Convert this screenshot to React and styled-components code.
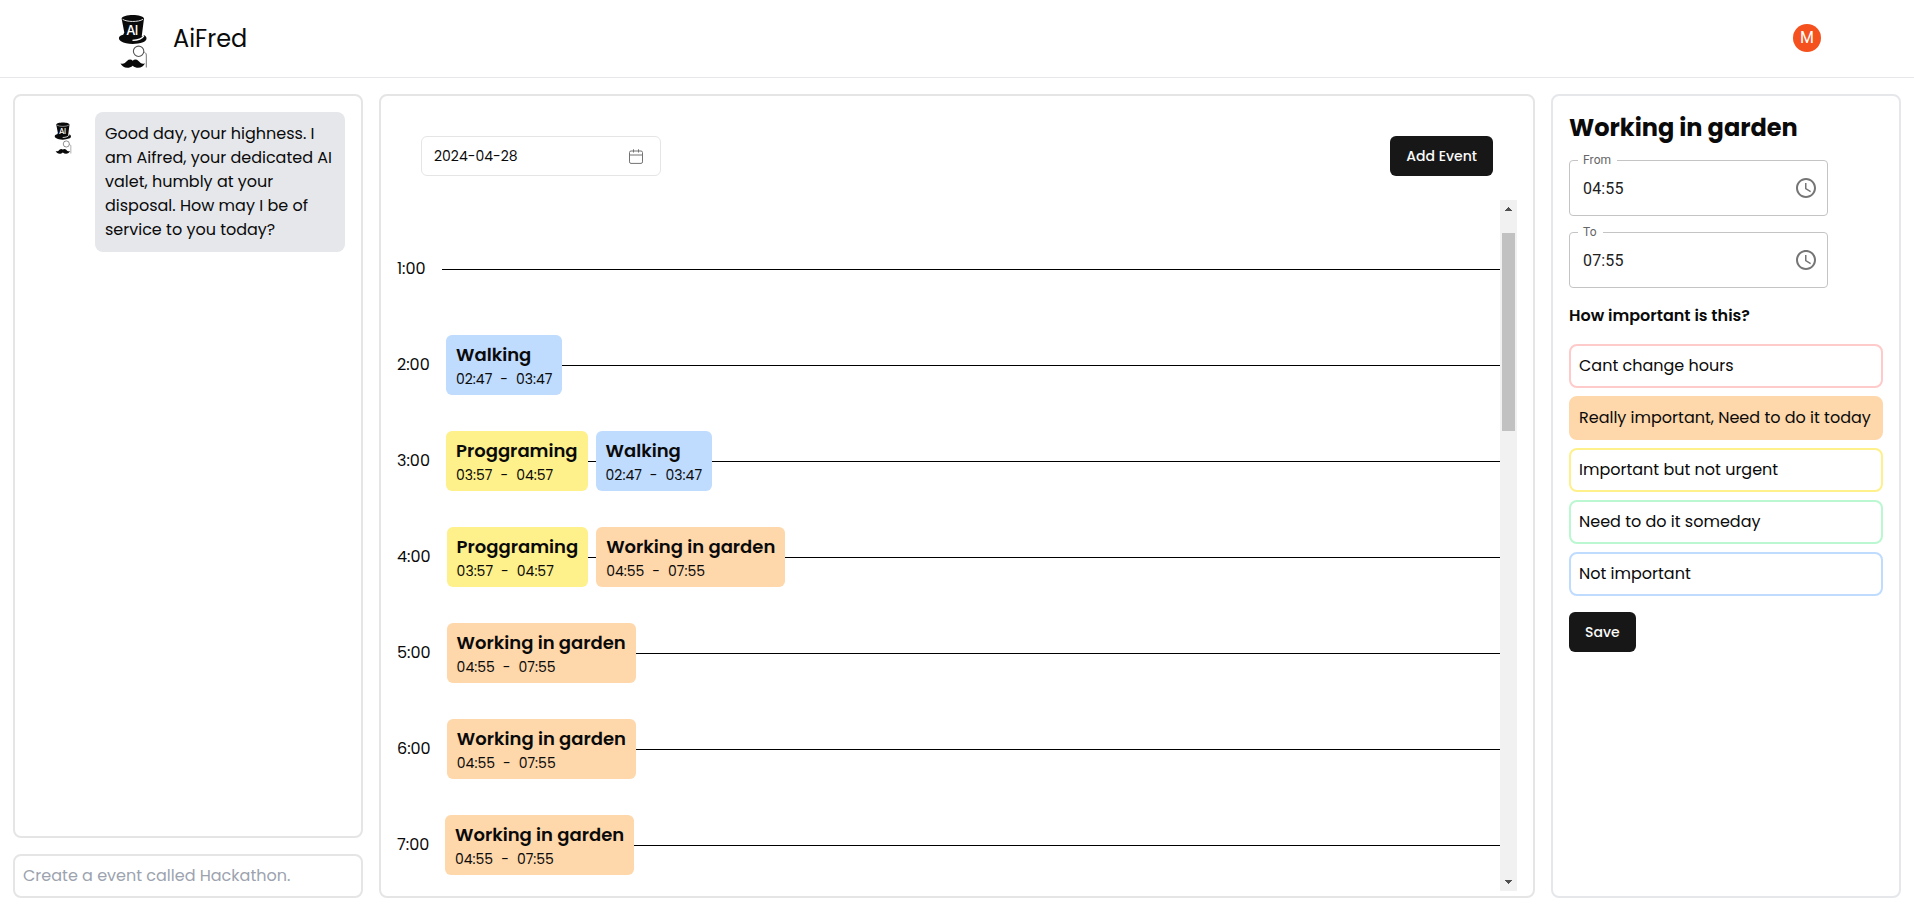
import React from "react";
import styled, { createGlobalStyle } from "styled-components";

const Global = createGlobalStyle`
  *, *::before, *::after { box-sizing: border-box; }
  body {
    margin: 0;
    background: #fff;
    color: #0a0a0a;
    font-family: Poppins, Inter, "Liberation Sans", sans-serif;
    font-size: 16px;
    line-height: 24px;
  }
  button, input { font: inherit; }
`;

const palette = {
  red: "#fecaca",
  orange: "#fed7aa",
  yellow: "#fef08a",
  green: "#bbf7d0",
  blue: "#bfdbfe",
};

const Page = styled.div`
  display: flex;
  flex-direction: column;
  height: 915px;
`;

const Header = styled.header`
  display: flex;
  align-items: center;
  justify-content: space-between;
  height: 78px;
  padding: 0 93px 0 118px;
  border-bottom: 1px solid #e5e7eb;
`;

const Brand = styled.div`
  display: flex;
  align-items: center;
  gap: 25px;
  padding-top: 6px;
`;

const BrandName = styled.span`
  font-size: 24px;
  line-height: 32px;
  margin-top: -6px;
`;

const Avatar = styled.div`
  display: flex;
  align-items: center;
  justify-content: center;
  width: 28px;
  height: 28px;
  margin-top: -1px;
  border-radius: 50%;
  background: #f4511e;
  color: #fff;
  font: 400 16px/28px Roboto, sans-serif;
`;

const Main = styled.main`
  display: grid;
  grid-template-columns: 350px 1fr 350px;
  gap: 16px;
  flex: 1;
  min-height: 0;
  padding: 16px 13px 17px;
`;

const Panel = styled.section`
  border: 2px solid ${(p) => p.$border || "#e5e5e5"};
  border-radius: 8px;
  min-height: 0;
`;

const ChatColumn = styled.div`
  display: flex;
  flex-direction: column;
  gap: 16px;
  min-height: 0;
`;

const ChatLog = styled(Panel)`
  display: flex;
  align-items: flex-start;
  flex: 1;
  padding: 16px 16px 16px 39px;
`;

const ChatAvatar = styled.div`
  width: 41px;
  padding-top: 10px;
  line-height: 0;
`;

const Bubble = styled.div`
  width: 250px;
  padding: 10px;
  border-radius: 8px;
  background: #e5e7eb;
`;

const ChatInput = styled.input`
  height: 44px;
  width: 100%;
  padding: 0 8px 2px;
  border: 2px solid #e5e5e5;
  border-radius: 8px;
  background: #fff;
  outline: none;
  &::placeholder { color: #9ca3af; opacity: 1; }
`;

const Calendar = styled(Panel)`
  display: flex;
  flex-direction: column;
  gap: 24px;
  padding: 40px 16px 5px;
`;

const Toolbar = styled.div`
  display: flex;
  justify-content: space-between;
  padding: 0 24px;
`;

const DateField = styled.div`
  display: flex;
  align-items: center;
  justify-content: space-between;
  width: 240px;
  height: 40px;
  padding: 0 17px 0 12px;
  border: 1px solid #e5e5e5;
  border-radius: 6px;
  font-size: 14px;
`;

const Button = styled.button`
  height: 40px;
  padding: 0 16px;
  border: 0;
  border-radius: 6px;
  background: #171717;
  color: #fafafa;
  font-size: 14px;
  font-weight: 500;
`;

const Schedule = styled.div`
  display: flex;
  flex: 1;
  min-height: 0;
  overflow: hidden;
`;

const Hours = styled.div`
  flex: 1;
  padding-top: 21px;
`;

const HourRow = styled.div`
  display: flex;
  align-items: center;
  height: 96px;
`;

const HourLabel = styled.span`
  width: ${(p) => p.$width}px;
`;

const HourTrack = styled.div`
  display: flex;
  align-items: center;
  gap: 8px;
  flex: 1;
  height: 60px;
  background: linear-gradient(#000, #000) 0 30px / 100% 1px no-repeat;
`;

const EventCard = styled.article`
  height: 60px;
  padding: 6px 10px;
  border-radius: 6px;
  background: ${(p) => palette[p.$color]};
  white-space: nowrap;
`;

const EventTitle = styled.div`
  font-size: 18px;
  line-height: 28px;
  font-weight: 600;
`;

const EventTime = styled.div`
  display: flex;
  gap: 8px;
  font-size: 14px;
  line-height: 20px;
`;

const Scrollbar = styled.div`
  display: flex;
  flex-direction: column;
  align-items: center;
  width: 17px;
  padding: 7px 0;
  background: #f1f1f1;
`;

const Thumb = styled.div`
  width: 13px;
  height: 198px;
  margin-top: 22px;
  background: #c1c1c1;
`;

const Arrow = styled.svg`
  display: block;
  width: 7px;
  height: 4px;
  fill: #505050;
  margin-top: ${(p) => (p.$end ? "auto" : 0)};
`;

const Details = styled(Panel)`
  display: flex;
  flex-direction: column;
  align-items: flex-start;
  padding: 16px;
`;

const DetailsTitle = styled.h1`
  margin: 0;
  font-size: 24px;
  line-height: 32px;
  font-weight: 700;
  white-space: nowrap;
`;

const TimeField = styled.fieldset`
  width: 259px;
  height: 62px;
  margin: 10px 0 0;
  padding: 10px 9px 0 13px;
  min-width: 0;
  border: 1px solid #c4c4c4;
  border-radius: 4px;
`;

const TimeValue = styled.div`
  display: flex;
  align-items: center;
  justify-content: space-between;
  height: 24px;
  color: #212121;
  font: 400 16px/23px Roboto, sans-serif;
  letter-spacing: 0.15px;
`;

const Legend = styled.legend`
  margin-left: -5px;
  padding: 0 6px 0 5px;
  color: #666;
  font: 400 12px/12px Roboto, sans-serif;
  letter-spacing: 0.11px;
`;

const Question = styled.h2`
  margin: 16px 0 0;
  font-size: 16px;
  line-height: 24px;
  font-weight: 600;
`;

const Options = styled.div`
  display: flex;
  flex-direction: column;
  gap: 8px;
  width: 100%;
  margin: 16px 0;
`;

const Option = styled.div`
  height: 44px;
  padding: 8px;
  border: 2px solid ${(p) => palette[p.$color]};
  border-radius: 8px;
  background: ${(p) => (p.$selected ? palette[p.$color] : "#fff")};
  white-space: nowrap;
`;

const LogoText = styled.text`
  font: 500 13px Inter, sans-serif;
  letter-spacing: -0.8px;
  fill: #fff;
`;

function Logo({ width, height }) {
  return (
    <svg width={width} height={height} viewBox="0 0 30 56">
      <path d="M3.600 4.600C4.300 -.2 25.300 -.2 26 4.600L23.700 22.500L26.500 21.300C29.300 23 29.500 26.500 25 28.200C18 30.800 8 30.400 3 27.300C-.8 24.800 1 21.400 5.200 20.800L6.300 18.500Z" fill="#0a0a0a" />
      <path d="M4.600 5.300C9 8.200 20.500 8.200 25 5.300" fill="none" stroke="#ddd" strokeWidth="1" />
      <path d="M14.500 26.300C20 26.200 24 24.800 25.800 21.800" fill="none" stroke="#fff" strokeWidth="1.300" />
      <LogoText x="8.300" y="20.500">AI</LogoText>
      <circle cx="20.600" cy="37.300" r="5.200" fill="none" stroke="#555" strokeWidth="1.100" />
      <path d="M25.700 37.500C26.600 39 28.300 38.600 28.300 41V53.500" fill="none" stroke="#777" strokeWidth="1" />
      <path d="M2.500 49.300C5.300 50.700 7 49 9 47C10.800 45.200 13.300 45.200 14.700 46.800C16.200 45.200 18.700 45.200 20.500 47C22.500 49 24.200 50.700 27 49.300C25.500 53.700 19 55.600 14.700 51.700C10.500 55.600 4 53.700 2.500 49.300Z" fill="#0a0a0a" />
    </svg>
  );
}

function CalendarIcon() {
  return (
    <svg width="14" height="15" viewBox="0 0 14 15" fill="none" stroke="#737373">
      <rect x="0.500" y="2" width="13" height="12.400" rx="1.500" />
      <path d="M0.500 6H13.500M4.500 .3V3.500M9.500 .3V3.500" />
    </svg>
  );
}

function ClockIcon() {
  return (
    <svg width="24" height="24" viewBox="0 0 24 24" fill="#757575">
      <path d="M11.990 2C6.470 2 2 6.480 2 12s4.470 10 9.990 10C17.520 22 22 17.520 22 12S17.520 2 11.990 2zM12 20c-4.420 0-8-3.580-8-8s3.580-8 8-8 8 3.580 8 8-3.580 8-8 8z" />
      <path d="M12.500 7H11v6l5.250 3.150.75-1.230-4.500-2.670z" />
    </svg>
  );
}

const walking = { title: "Walking", from: "02:47", to: "03:47", color: "blue" };
const programming = { title: "Proggraming", from: "03:57", to: "04:57", color: "yellow" };
const garden = { title: "Working in garden", from: "04:55", to: "07:55", color: "orange" };

const hours = [
  { label: "1:00", width: 45, events: [] },
  { label: "2:00", width: 49, events: [walking] },
  { label: "3:00", width: 49, events: [programming, walking] },
  { label: "4:00", width: 49.6, events: [programming, garden] },
  { label: "5:00", width: 49.6, events: [garden] },
  { label: "6:00", width: 49.8, events: [garden] },
  { label: "7:00", width: 48, events: [garden] },
];

const options = [
  { text: "Cant change hours", color: "red" },
  { text: "Really important, Need to do it today", color: "orange", selected: true },
  { text: "Important but not urgent", color: "yellow" },
  { text: "Need to do it someday", color: "green" },
  { text: "Not important", color: "blue" },
];

const timeFields = [
  { label: "From", value: "04:55" },
  { label: "To", value: "07:55" },
];

export default function App() {
  return (
    <Page>
      <Global />
      <Header>
        <Brand>
          <Logo width={30} height={56} />
          <BrandName>AiFred</BrandName>
        </Brand>
        <Avatar>M</Avatar>
      </Header>
      <Main>
        <ChatColumn>
          <ChatLog>
            <ChatAvatar>
              <Logo width={18} height={33} />
            </ChatAvatar>
            <Bubble>
              Good day, your highness. I am Aifred, your dedicated AI valet, humbly at your
              disposal. How may I be of service to you today?
            </Bubble>
          </ChatLog>
          <ChatInput placeholder="Create a event called Hackathon." />
        </ChatColumn>

        <Calendar>
          <Toolbar>
            <DateField>
              2024-04-28
              <CalendarIcon />
            </DateField>
            <Button>Add Event</Button>
          </Toolbar>
          <Schedule>
            <Hours>
              {hours.map((hour) => (
                <HourRow key={hour.label}>
                  <HourLabel $width={hour.width}>{hour.label}</HourLabel>
                  <HourTrack>
                    {hour.events.map((event) => (
                      <EventCard key={event.title} $color={event.color}>
                        <EventTitle>{event.title}</EventTitle>
                        <EventTime>
                          <span>{event.from}</span>
                          <span>-</span>
                          <span>{event.to}</span>
                        </EventTime>
                      </EventCard>
                    ))}
                  </HourTrack>
                </HourRow>
              ))}
            </Hours>
            <Scrollbar>
              <Arrow viewBox="0 0 7 4"><path d="M0 4V3H1V2H2V1H3V0H4V1H5V2H6V3H7V4Z" /></Arrow>
              <Thumb />
              <Arrow $end viewBox="0 0 7 4"><path d="M0 0V1H1V2H2V3H3V4H4V3H5V2H6V1H7V0Z" /></Arrow>
            </Scrollbar>
          </Schedule>
        </Calendar>

        <Details $border="#e5e7eb">
          <DetailsTitle>Working in garden</DetailsTitle>
          {timeFields.map((field) => (
            <TimeField key={field.label}>
              <Legend>{field.label}</Legend>
              <TimeValue>
                {field.value}
                <ClockIcon />
              </TimeValue>
            </TimeField>
          ))}
          <Question>How important is this?</Question>
          <Options>
            {options.map((option) => (
              <Option key={option.text} $color={option.color} $selected={option.selected}>
                {option.text}
              </Option>
            ))}
          </Options>
          <Button>Save</Button>
        </Details>
      </Main>
    </Page>
  );
}
